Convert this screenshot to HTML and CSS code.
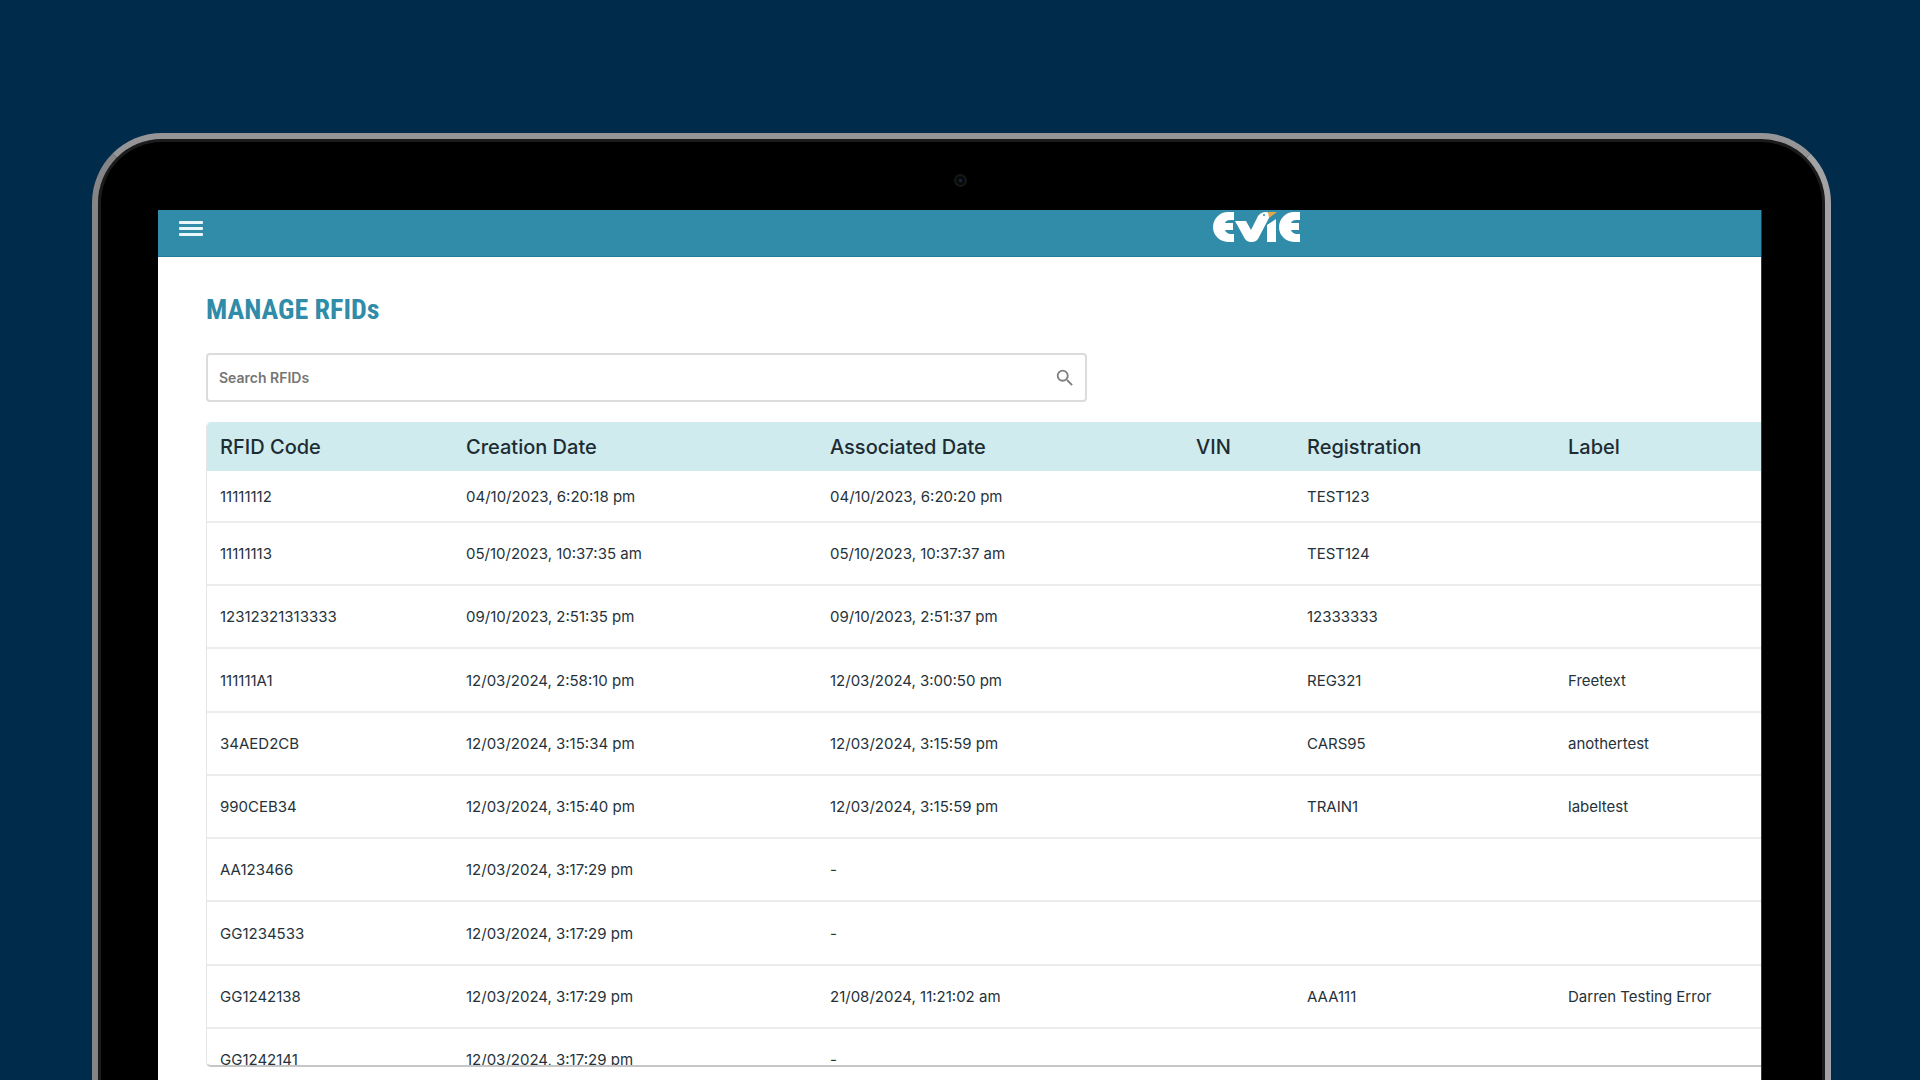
FILE: index.html
```html
<!DOCTYPE html>
<html lang="en">
<head>
  <meta charset="UTF-8">
  <meta name="viewport" content="width=device-width, initial-scale=1.0">
  <title>Manage RFIDs</title>
  <link rel="stylesheet" href="styles.css">
</head>
<body>

  <div class="laptop">
    <div class="bezel">
      <div class="camera"></div>
    </div>

    <div class="screen">
      <header class="topbar">
        <button class="menu-btn" type="button" aria-label="Menu">
          <svg width="24" height="18" viewBox="0 0 24 18" fill="#e9f8fb">
            <rect x="0" y="0" width="24" height="3" rx="1"/>
            <rect x="0" y="6" width="24" height="3" rx="1"/>
            <rect x="0" y="12" width="24" height="3" rx="1"/>
          </svg>
        </button>
        <a class="logo" href="#" aria-label="Evie">
          <svg width="88" height="33" viewBox="0 0 88 33">
            <g fill="#ffffff">
              <path d="M21 2H15A15 15 0 0 0 15 32H21V24H17Q13 23 12 20H20V13H12Q13 10 17 10H21Z"/>
              <path d="M22 11H33L38 20L45 6Q48 2 53 2Q56 2 57 6L45 29Q43 32 40 32H37Q34 32 32 29Z"/>
              <path d="M54 15L63 9V32H54Z"/>
              <path d="M87 2H81A15 15 0 0 0 81 32H87V24H83Q79 23 78 20H86V13H78Q79 10 83 10H87Z"/>
            </g>
            <path d="M55 2H64L56 8Z" fill="#e0a84a"/>
            <circle cx="51" cy="5" r="1" fill="#308ca8"/>
          </svg>
        </a>
      </header>

      <main class="content">
        <h1>MANAGE RFIDs</h1>

        <form class="search">
          <input type="search" placeholder="Search RFIDs" aria-label="Search RFIDs">
          <button class="search-btn" type="submit" aria-label="Search">
            <svg width="22" height="22" viewBox="0 0 24 24" fill="#808080">
              <path d="M15.500 14h-.79l-.28-.27A6.470 6.470 0 0 0 16 9.500 6.500 6.500 0 1 0 9.500 16c1.610 0 3.090-.59 4.230-1.570l.27.28v.79l5 4.990L20.490 19l-4.990-5zm-6 0C7.010 14 5 11.990 5 9.500S7.010 5 9.500 5 14 7.010 14 9.500 11.990 14 9.500 14z"/>
            </svg>
          </button>
        </form>

        <div class="table-wrap">
          <table id="rfid-table">
            <colgroup>
              <col class="col-code">
              <col class="col-created">
              <col class="col-associated">
              <col class="col-vin">
              <col class="col-reg">
              <col class="col-label">
            </colgroup>
            <thead>
              <tr>
                <th>RFID Code</th>
                <th>Creation Date</th>
                <th>Associated Date</th>
                <th>VIN</th>
                <th>Registration</th>
                <th>Label</th>
              </tr>
            </thead>
            <tbody>
              <tr><td>11111112</td><td>04/10/2023, 6:20:18 pm</td><td>04/10/2023, 6:20:20 pm</td><td></td><td>TEST123</td><td></td></tr>
              <tr><td>11111113</td><td>05/10/2023, 10:37:35 am</td><td>05/10/2023, 10:37:37 am</td><td></td><td>TEST124</td><td></td></tr>
              <tr><td>12312321313333</td><td>09/10/2023, 2:51:35 pm</td><td>09/10/2023, 2:51:37 pm</td><td></td><td>12333333</td><td></td></tr>
              <tr><td>111111A1</td><td>12/03/2024, 2:58:10 pm</td><td>12/03/2024, 3:00:50 pm</td><td></td><td>REG321</td><td>Freetext</td></tr>
              <tr><td>34AED2CB</td><td>12/03/2024, 3:15:34 pm</td><td>12/03/2024, 3:15:59 pm</td><td></td><td>CARS95</td><td>anothertest</td></tr>
              <tr><td>990CEB34</td><td>12/03/2024, 3:15:40 pm</td><td>12/03/2024, 3:15:59 pm</td><td></td><td>TRAIN1</td><td>labeltest</td></tr>
              <tr><td>AA123466</td><td>12/03/2024, 3:17:29 pm</td><td>-</td><td></td><td></td><td></td></tr>
              <tr><td>GG1234533</td><td>12/03/2024, 3:17:29 pm</td><td>-</td><td></td><td></td><td></td></tr>
              <tr><td>GG1242138</td><td>12/03/2024, 3:17:29 pm</td><td>21/08/2024, 11:21:02 am</td><td></td><td>AAA111</td><td>Darren Testing Error</td></tr>
              <tr><td>GG1242141</td><td>12/03/2024, 3:17:29 pm</td><td>-</td><td></td><td></td><td></td></tr>
            </tbody>
          </table>
        </div>
      </main>
    </div>
  </div>

</body>
</html>
```

FILE: styles.css
```css
* {
  box-sizing: border-box;
}
body {
  margin: 0;
  height: 100vh;
  overflow: hidden;
  padding: 133px 89px 0 92px;
  background-color: #002b4a;
  font-family: Inter, "Liberation Sans", sans-serif;
  color: #26323a;
}

/* laptop frame */
.laptop {
  height: calc(100% + 10px);
  display: flex;
  flex-direction: column;
  padding: 0 63px 0 60px;
  background: #000;
  border: 6px solid #a3a3a5;
  border-left-color: #858587;
  border-top-color: #959597;
  border-bottom: none;
  border-radius: 70px 70px 0 0;
  box-shadow: inset 0 0 0 3px #1b1b1b;
}
.bezel {
  flex: none;
  height: 71px;
  display: flex;
  justify-content: center;
  padding-top: 35px;
}
.camera {
  width: 13px;
  height: 13px;
  border: 2px solid #131818;
  border-radius: 50%;
  background: radial-gradient(circle, #1c2440 1px, #080b0b 2px);
}
.screen {
  flex: 1;
  min-height: 0;
  overflow: hidden;
  background: #fff;
  border-right: 1px solid #0d4468;
}

/* top bar */
.topbar {
  height: 47px;
  display: flex;
  align-items: flex-start;
  background: #308ca8;
  border-bottom: 1px solid #1f7d9b;
}
.menu-btn {
  margin: 11px 0 0 21px;
  padding: 0;
  border: none;
  background: none;
  cursor: pointer;
  line-height: 0;
}
.logo {
  margin-left: 63%;
  line-height: 0;
}

/* page */
.content {
  padding: 36px 0 0 48px;
}
h1 {
  margin: 0 0 26px;
  font-family: "Roboto Condensed", "Open Sans Condensed", Roboto, sans-serif;
  font-size: 28px;
  line-height: 34px;
  color: #308ca8;
}
.search {
  display: flex;
  align-items: center;
  max-width: 881px;
  height: 49px;
  padding: 0 9px 0 11px;
  border: 2px solid #dcdcdc;
  border-radius: 4px;
}
.search input {
  flex: 1;
  padding: 0;
  border: none;
  outline: none;
  background: none;
  font: 600 14px Inter, sans-serif;
}
.search input::placeholder {
  color: #757575;
}
.search-btn {
  padding: 0;
  border: none;
  background: none;
  cursor: pointer;
  line-height: 0;
}

/* table */
.table-wrap {
  height: 645px;
  margin-top: 20px;
  overflow: hidden;
  border-left: 1px solid #e6e6e6;
  border-bottom: 2px solid #c6c6c6;
  border-radius: 5px 0 0 5px;
}
table {
  width: 100%;
  table-layout: fixed;
  border-collapse: separate;
  border-spacing: 0;
}
.col-code { width: 246px; }
.col-created { width: 364px; }
.col-associated { width: 366px; }
.col-vin { width: 111px; }
.col-reg { width: 261px; }
.col-label { width: auto; }
th, td {
  padding: 0 0 0 13px;
  text-align: left;
  white-space: nowrap;
}
th {
  height: 49px;
  background: #cfebee;
  font-size: 20px;
  font-weight: 500;
  color: #1d2c33;
}
td {
  height: 63px;
  font-size: 15px;
  border-bottom: 2px solid #ececec;
}
tbody tr:first-child td {
  height: 52px;
}
tbody tr:nth-child(4n) td {
  height: 64px;
}
```
